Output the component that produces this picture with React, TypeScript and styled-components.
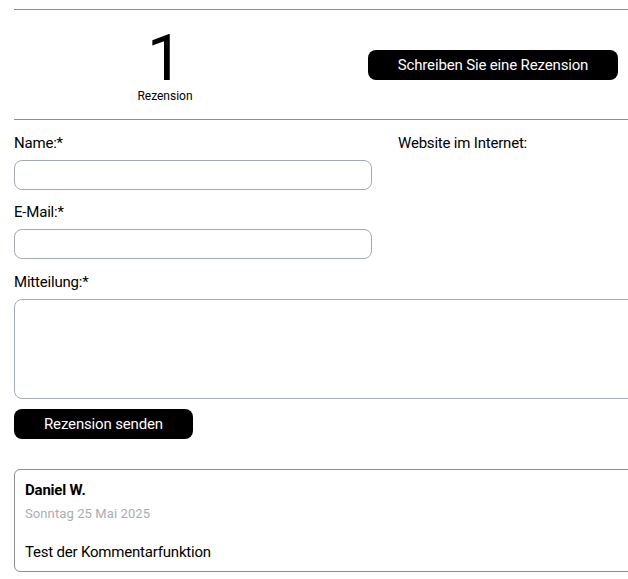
import { createGlobalStyle, styled } from 'styled-components'

const GlobalStyle = createGlobalStyle`
  html, body {
    margin: 0;
    padding: 0;
    background: #ffffff;
    overflow: hidden;
  }
  body {
    font-family: Roboto, 'Liberation Sans', sans-serif;
    color: #000000;
  }
`

const App = () => {
  return (
    <>
      <GlobalStyle />
      <Page>
        <Summary>
          <CountBox>
            <Count>1</Count>
            <CountLabel>Rezension</CountLabel>
          </CountBox>
          <ActionBox>
            <BlackButton $width={250}>Schreiben Sie eine Rezension</BlackButton>
          </ActionBox>
        </Summary>

        <Form>
          <FieldRow>
            <Field>
              <Label>Name:*</Label>
              <TextInput type="text" />
            </Field>
            <Field>
              <Label>Website im Internet:</Label>
            </Field>
          </FieldRow>
          <Field>
            <Label>E-Mail:*</Label>
            <TextInput type="text" />
          </Field>
          <Field $offset={1}>
            <Label>Mitteilung:*</Label>
            <TextArea />
          </Field>
          <BlackButton $width={179}>Rezension senden</BlackButton>
        </Form>

        <ReviewCard>
          <Author>Daniel W.</Author>
          <ReviewDate>Sonntag 25 Mai 2025</ReviewDate>
          <ReviewText>Test der Kommentarfunktion</ReviewText>
        </ReviewCard>
      </Page>
    </>
  )
}

export default App

const Page = styled.div`
  display: flex;
  flex-direction: column;
  width: 760px;
  padding: 9px 0 0 14px;
`

const Summary = styled.div`
  display: grid;
  grid-template-columns: 302px 302px;
  align-items: start;
  height: 109px;
  border-top: 1px solid #8e8e8e;
  border-bottom: 1px solid #8e8e8e;
`

const CountBox = styled.div`
  display: flex;
  flex-direction: column;
  align-items: center;
  padding-top: 21px;
`

const Count = styled.div`
  font-size: 64px;
  line-height: 56px;
  font-weight: 400;
`

const CountLabel = styled.div`
  font-size: 12px;
  line-height: 14px;
  margin-top: 2px;
`

const ActionBox = styled.div`
  display: flex;
  justify-content: flex-end;
  padding-top: 40px;
`

const BlackButton = styled.button<{ $width: number }>`
  width: ${(p) => p.$width}px;
  height: 30px;
  border: none;
  border-radius: 8px;
  background: #000000;
  color: #ffffff;
  font-family: Roboto, 'Liberation Sans', sans-serif;
  font-size: 15px;
  letter-spacing: -0.15px;
  padding: 0;
  cursor: pointer;
`

const Form = styled.div`
  display: flex;
  flex-direction: column;
  gap: 13px;
  padding-top: 14px;

  & > button {
    margin-top: -3px;
  }
`

const FieldRow = styled.div`
  display: grid;
  grid-template-columns: 358px 358px;
  column-gap: 26px;
`

const Field = styled.div<{ $offset?: number }>`
  display: flex;
  flex-direction: column;
  gap: 8px;
  margin-top: ${(p) => p.$offset ?? 0}px;
`

const Label = styled.label`
  font-size: 15px;
  line-height: 18px;
  letter-spacing: -0.2px;
`

const TextInput = styled.input`
  box-sizing: border-box;
  width: 358px;
  height: 30px;
  border: 1px solid #a3aab1;
  border-radius: 8px;
  outline: none;
`

const TextArea = styled.textarea`
  box-sizing: border-box;
  width: 742px;
  height: 100px;
  border: 1px solid #a3aab1;
  border-radius: 8px;
  resize: none;
  outline: none;
`

const ReviewCard = styled.div`
  box-sizing: border-box;
  display: flex;
  flex-direction: column;
  width: 742px;
  margin-top: 30px;
  padding: 11px 10px 10px 10px;
  border: 1px solid #8e8e8e;
  border-radius: 6px;
`

const Author = styled.div`
  font-size: 15px;
  line-height: 18px;
  font-weight: 700;
  letter-spacing: -0.2px;
`

const ReviewDate = styled.div`
  font-size: 13px;
  line-height: 16px;
  color: #a9aeb3;
  margin-top: 7px;
  letter-spacing: 0.1px;
`

const ReviewText = styled.div`
  font-size: 15px;
  line-height: 18px;
  margin-top: 21px;
  letter-spacing: -0.2px;
`
